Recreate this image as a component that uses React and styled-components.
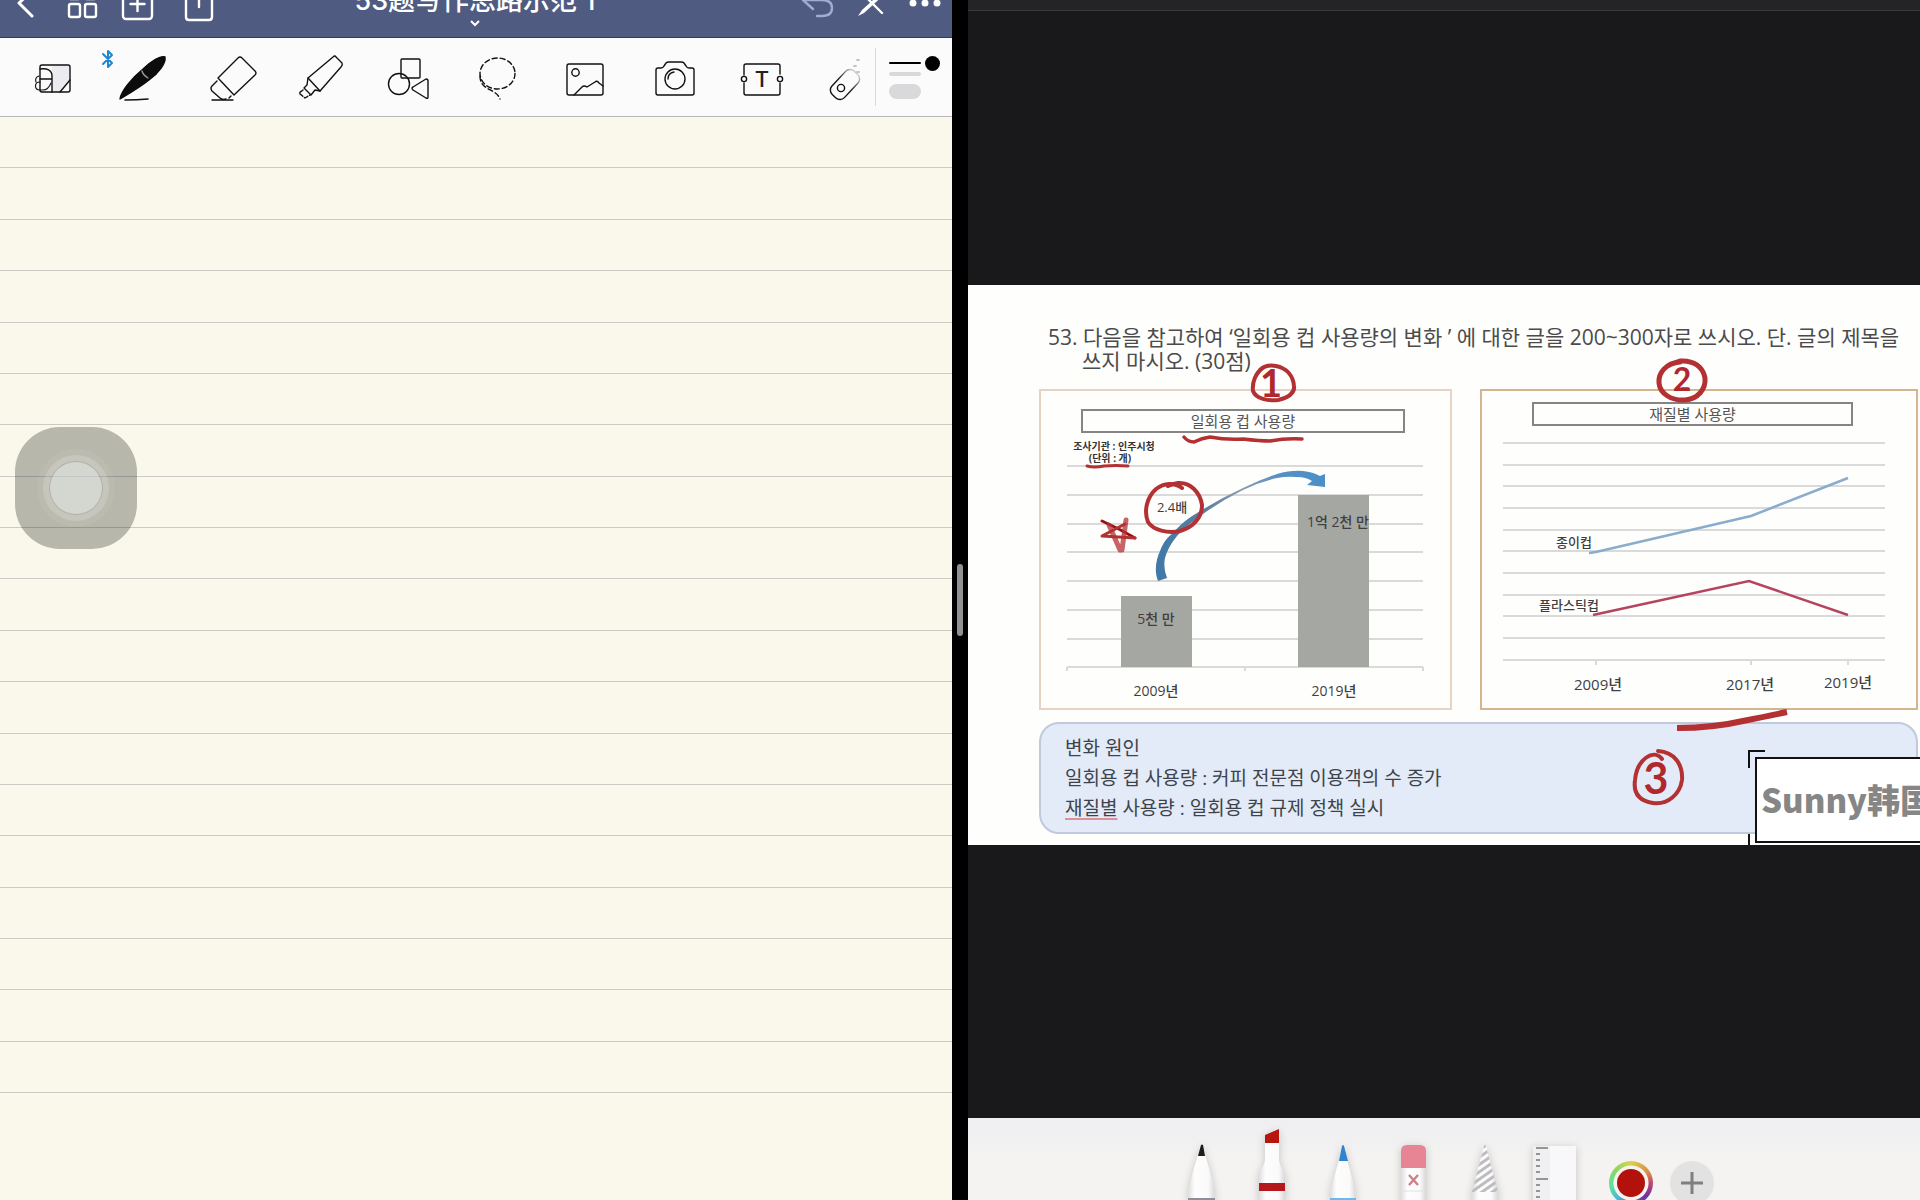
import { useState } from 'react'
import styled, { createGlobalStyle, css } from 'styled-components'

const GlobalStyle = createGlobalStyle`
*{
    box-sizing: border-box;
}
body{
    margin: 0;
    background: #000;
    font-family: "Open Sans", "Noto Sans CJK KR", sans-serif;
}
h1, h2, p, ul{
    margin: 0;
    padding: 0;
}
button{
    padding: 0;
    border: none;
    background: none;
    cursor: pointer;
}
svg{
    display: block;
    overflow: visible;
}
`

/* ---------- notebook (left side) ---------- */

const tools = [
    {
        name: 'Read only',
        icon: <>
            <path d="M23 17H40V31L31 42H23Z" fill="#ececf0" stroke="none"/>
            <rect x="11" y="16" width="30" height="27" rx="2"/>
            <path d="M11 20C18 19 23 21 23 27V43M11 30H23M31 43L41 31"/>
            <path d="M10 27C7 28 6 30 7 33M11 33C5 33 5 41 11 41H14C17 41 20 39 22 34" strokeWidth="1.1"/>
        </>
    },
    {
        name: 'Pen',
        bluetooth: true,
        icon: <>
            <path d="M3 50C4 42 15 29 26 20C34 12 44 6 48 8C49 14 42 24 32 31C22 39 8 47 3 50Z" fill="#0c0c0c" stroke="#0c0c0c"/>
            <path d="M25 22Q26 26 31 29" stroke="#9a9a9a"/>
            <path d="M8 51Q20 51 31 50" strokeWidth="1.6"/>
        </>
    },
    {
        name: 'Eraser',
        icon: <>
            <path d="M36 9L49 22Q51 24 49 26L28 46L12 29L32 9Q34 7 36 9Z"/>
            <path d="M11 32L6 37Q4 39 6 42L14 49Q16 51 20 50M23 49L25 47"/>
            <path d="M6 51H27"/>
        </>
    },
    {
        name: 'Highlighter',
        icon: <>
            <path d="M42 8L48 14Q49 16 47 18L26 42L14 29L39 8Q41 6 42 8Z"/>
            <path d="M14 29L13 36L10 39L17 46L21 41L26 42"/>
            <path d="M9 41L5 44L11 49L16 46" strokeDasharray="4 2"/>
        </>
    },
    {
        name: 'Shapes',
        icon: <>
            <rect x="18" y="10" width="19" height="19" rx="1"/>
            <circle cx="16" cy="35" r="10.5"/>
            <path d="M30 38L43 30Q45 30 45 32V48Q45 50 43 49L30 41Q28 39 30 38Z"/>
        </>
    },
    {
        name: 'Lasso',
        icon: <>
            <ellipse cx="26.5" cy="24.5" rx="17.5" ry="15.5" strokeDasharray="5 3"/>
            <path d="M9 27C9 42 25 39 29 50" strokeDasharray="5 3"/>
        </>
    },
    {
        name: 'Image',
        icon: <>
            <rect x="7" y="15" width="36" height="31" rx="2"/>
            <circle cx="15.5" cy="23.5" r="3.7"/>
            <path d="M14 46L22 38Q24 36 27 38L35 33Q37 31 39 34L43 37"/>
        </>
    },
    {
        name: 'Camera',
        icon: <>
            <path d="M10 19H13Q15 19 16 17L18 14Q19 13 21 13H33Q35 13 36 14L38 17Q39 19 41 19H44Q46 19 46 21V44Q46 46 44 46H10Q8 46 8 44V21Q8 19 10 19Z"/>
            <circle cx="27" cy="30" r="10"/>
            <path d="M20 30Q20 24 26 23"/>
        </>
    },
    {
        name: 'Text',
        icon: <>
            <path d="M7 26V17Q7 15 9 15H41Q43 15 43 17V25M43 34V44Q43 46 41 46H9Q7 46 7 44V34"/>
            <circle cx="7" cy="30" r="2.6"/>
            <circle cx="43" cy="30" r="2.6"/>
            <text x="25" y="38" textAnchor="middle" fontSize="22" fontWeight="500" fontFamily="Inter, sans-serif" fill="#222" stroke="none">T</text>
        </>
    },
    {
        name: 'Laser pointer',
        icon: <>
            <defs>
                <linearGradient id="laser" x1="0" x2="1">
                    <stop offset="0.5" stopColor="#111"/>
                    <stop offset="1" stopColor="#ccc"/>
                </linearGradient>
            </defs>
            <rect x="4" y="27" width="32" height="17" rx="6" transform="rotate(-47 20 35.5)" stroke="url(#laser)"/>
            <circle cx="16" cy="39" r="3.6"/>
            <path d="M32 11h2M29 17h2M32 23h2" stroke="#c4c4c4" strokeWidth="2"/>
        </>
    }
]

const Notebook = () => {
    const [tool, setTool] = useState('Pen')

    return(
        <NotePane>
            <NavBar>
                <NavGroup>
                    <NavButton aria-label="Back">
                        <svg width="40" height="44" viewBox="0 0 40 44"><path d="M28 -2L14 11L27 24" strokeWidth="3"/></svg>
                    </NavButton>
                    <NavButton aria-label="All pages">
                        <svg width="40" height="44" viewBox="0 0 40 44">
                            <rect x="6" y="-6" width="11" height="13" rx="2"/>
                            <rect x="22" y="-6" width="11" height="13" rx="2"/>
                            <rect x="6" y="12" width="11" height="13" rx="2"/>
                            <rect x="22" y="12" width="11" height="13" rx="2"/>
                        </svg>
                    </NavButton>
                    <NavButton aria-label="Add page">
                        <svg width="40" height="44" viewBox="0 0 40 44">
                            <rect x="2" y="-1" width="29" height="28" rx="3"/>
                            <path d="M16.500 5V19M9.500 12H23.500"/>
                        </svg>
                    </NavButton>
                    <NavButton aria-label="Share">
                        <svg width="40" height="44" viewBox="0 0 40 44">
                            <path d="M12 1H9Q7 1 7 3V25Q7 28 10 28H30Q33 28 33 25V3Q33 1 31 1H28M20 -6V15"/>
                        </svg>
                    </NavButton>
                </NavGroup>
                <TitleButton aria-label="Document menu">
                    <NoteTitle>53题写作思路示范 1</NoteTitle>
                    <svg width="12" height="8" viewBox="0 0 12 8"><path d="M2 2L6 6L10 2"/></svg>
                </TitleButton>
                <NavGroup $right>
                    <NavButton aria-label="Undo" $dim>
                        <svg width="40" height="44" viewBox="0 0 40 44"><path d="M16 17L6 8L16 -1M7 8H25Q35 8 35 16Q35 24 25 24H20"/></svg>
                    </NavButton>
                    <NavButton aria-label="Edit mode">
                        <svg width="40" height="44" viewBox="0 0 40 44">
                            <path d="M11 1L31 21"/>
                            <path d="M33 -2L11 18L7 24L13 21L35 1Z" fill="#fff" stroke="none"/>
                        </svg>
                    </NavButton>
                    <NavButton aria-label="More">
                        <svg width="40" height="44" viewBox="0 0 40 44">
                            <g fill="#fff" stroke="none">
                                <circle cx="8" cy="11" r="3.500"/>
                                <circle cx="20" cy="11" r="3.500"/>
                                <circle cx="32" cy="11" r="3.500"/>
                            </g>
                        </svg>
                    </NavButton>
                </NavGroup>
            </NavBar>
            <ToolBar>
                <ToolList>
                    {tools.map((t) => (
                        <ToolButton key={t.name} aria-label={t.name} aria-pressed={tool === t.name} onClick={() => setTool(t.name)}>
                            {t.bluetooth && (
                                <Bluetooth width="12" height="20" viewBox="0 0 12 20">
                                    <path d="M1 5L10 14L6 18V2L10 6L1 15"/>
                                </Bluetooth>
                            )}
                            <svg width="48" height="56" viewBox="0 0 48 56">{t.icon}</svg>
                        </ToolButton>
                    ))}
                </ToolList>
                <StrokePanel>
                    <StrokeList>
                        <StrokeButton aria-label="Thin stroke" $size={2} $active/>
                        <StrokeButton aria-label="Medium stroke" $size={4}/>
                        <StrokeButton aria-label="Thick stroke" $size={15}/>
                    </StrokeList>
                    <InkButton aria-label="Black ink"/>
                </StrokePanel>
            </ToolBar>
            <Paper>
                {Array.from({ length: 19 }, (_, i) => <Rule key={i}/>)}
                <TouchButton aria-label="Assistive touch"/>
            </Paper>
        </NotePane>
    )
}

const NotePane = styled.section`
flex: 1;
min-width: 0;
display: flex;
flex-direction: column;
background: #faf8ea;
`

/* the bar is shorter than its content, the overflow goes off the top */
const NavBar = styled.header`
display: grid;
grid-template-columns: 1fr auto 1fr;
grid-template-rows: 100%;
align-items: end;
height: 38px;
padding: 0 7px 1px 5px;
overflow: hidden;
background: #4f5b80;
border-bottom: 1px solid #2f3a5c;
`

const NavGroup = styled.div`
display: flex;
gap: 18px;
${({ $right }) => $right && css`
    gap: 14px;
    justify-content: flex-end;
`}
`

const NavButton = styled.button`
width: 40px;
height: 44px;
svg{
    fill: none;
    stroke: ${({ $dim }) => ($dim ? '#a3abd0' : '#fff')};
    stroke-width: 2.4;
    stroke-linecap: round;
    stroke-linejoin: round;
}
`

const TitleButton = styled.button`
display: flex;
flex-direction: column;
align-items: center;
padding-bottom: 9px;
color: #fff;
svg{
    fill: none;
    stroke: #fff;
    stroke-width: 2;
}
`

const NoteTitle = styled.h1`
font: 500 27px/36px Inter, "Noto Sans CJK SC", sans-serif;
white-space: nowrap;
`

const ToolBar = styled.div`
display: flex;
align-items: center;
height: 79px;
padding-left: 29px;
background: #fbfbfc;
border-bottom: 1px solid #b6b8ba;
`

const ToolList = styled.div`
flex: 1;
display: flex;
justify-content: space-between;
`

const ToolButton = styled.button`
position: relative;
width: 48px;
height: 56px;
svg{
    fill: none;
    stroke: #111;
    stroke-width: 1.4;
    stroke-linecap: round;
    stroke-linejoin: round;
}
`

const Bluetooth = styled.svg`
position: absolute;
left: -15px;
top: 0;
&&{
    stroke: #1f86cf;
    stroke-width: 2;
}
`

const StrokePanel = styled.div`
display: flex;
gap: 4px;
width: 77px;
height: 58px;
margin-left: 2px;
padding: 7px 0 0 13px;
border-left: 1px solid #d9d9dc;
`

const StrokeList = styled.div`
display: flex;
flex-direction: column;
gap: 8px;
padding-top: 7px;
`

const StrokeButton = styled.button`
width: 32px;
height: ${({ $size }) => $size}px;
border-radius: 8px;
background: ${({ $active }) => ($active ? '#000' : '#d9d9db')};
`

const InkButton = styled.button`
width: 15px;
height: 15px;
margin-top: 1px;
border-radius: 50%;
background: #000;
`

const Paper = styled.div`
position: relative;
flex: 1;
display: flex;
flex-direction: column;
padding-bottom: 107px;
`

const Rule = styled.div`
flex: 1;
border-bottom: 1px solid #cbcbc5;
`

const TouchButton = styled.button`
position: absolute;
left: 15px;
top: 310px;
width: 122px;
height: 122px;
border-radius: 45px;
background: rgba(37, 38, 36, 0.31);
&::after{
    content: '';
    display: block;
    width: 52px;
    height: 52px;
    margin: auto;
    border-radius: 50%;
    background: rgba(236, 240, 238, 0.55);
    box-shadow: 0 0 0 1px rgba(120, 120, 115, 0.25), 0 0 0 7px rgba(255, 255, 255, 0.16), 0 0 0 13px rgba(255, 255, 255, 0.06);
}
`

/* ---------- slide (right side) ---------- */

const usage = [
    { year: '2009년', x: 80, mid: 115, top: 163, label: '5천 만', labelX: 115, labelY: 191 },
    { year: '2019년', x: 257, mid: 293, top: 62, label: '1억 2천 만', labelX: 297, labelY: 94 }
]

const UsageChart = () => (
    <Chart viewBox="0 0 409 275" role="img" aria-label="일회용 컵 사용량">
        <defs>
            <linearGradient id="arrow" x1="0" x2="1">
                <stop offset="0" stopColor="#3f78a8"/>
                <stop offset="0.3" stopColor="#5f7f9c"/>
                <stop offset="0.5" stopColor="#8a9cb0"/>
                <stop offset="0.75" stopColor="#5490c2"/>
                <stop offset="1" stopColor="#4b8fc9"/>
            </linearGradient>
        </defs>
        <ChartNote x="73" y="17">조사기관 : 인주시청</ChartNote>
        <ChartNote x="69" y="29">(단위 : 개)</ChartNote>
        {[33, 62, 91, 119, 148, 177, 206, 234].map((y) => <GridLine key={y} x1="26" x2="382" y1={y} y2={y}/>)}
        {[26, 204, 382].map((x) => <GridLine key={x} x1={x} x2={x} y1="234" y2="238"/>)}
        {usage.map((u) => (
            <g key={u.year}>
                <rect x={u.x} y={u.top} width="71" height={234 - u.top} fill="#a5a7a3"/>
                <ChartText x={u.labelX} y={u.labelY} $size={14}>{u.label}</ChartText>
                <ChartText x={u.mid} y="263" $size={14}>{u.year}</ChartText>
            </g>
        ))}
        <ChartText x="131" y="79">2.4배</ChartText>
        <path
            fill="url(#arrow)"
            d="M117 148C113 138 115 127 119 118C123 108 126 105 132 100C140 91 147 85 156 80Q178 66 202 55Q220 46 236 41Q250 37 262 38Q272 39 279 43L284 41V54L266 52L271 48Q265 44 256 44Q246 43 236 45Q218 49 202 57Q180 68 162 81C150 90 142 96 136 103Q127 114 124 125Q122 135 126 145Z"
        />
    </Chart>
)

const MaterialChart = () => (
    <Chart viewBox="0 0 434 282" role="img" aria-label="재질별 사용량">
        {[17, 39, 60, 82, 104, 125, 147, 169, 190, 212, 234].map((y) => <GridLine key={y} x1="21" x2="403" y1={y} y2={y}/>)}
        {[114, 269, 366].map((x) => <GridLine key={x} x1={x} x2={x} y1="234" y2="239"/>)}
        <polyline points="107,127 114,126 269,90 366,52" fill="none" stroke="#8aaccd" strokeWidth="2.500"/>
        <polyline points="111,189 267,155 366,189" fill="none" stroke="#b5455e" strokeWidth="2.500"/>
        <ChartText x="92" y="121">종이컵</ChartText>
        <ChartText x="87" y="184">플라스틱컵</ChartText>
        <ChartText x="116" y="264" $size={15}>2009년</ChartText>
        <ChartText x="268" y="264" $size={15}>2017년</ChartText>
        <ChartText x="366" y="262" $size={15}>2019년</ChartText>
    </Chart>
)

// red pen marks drawn on top of the slide
const Ink = () => (
    <InkLayer viewBox="0 0 952 558">
        <path d="M296 82C287 88 284 98 285 106C288 114 300 116 310 115C320 113 327 108 326 101C325 90 318 83 308 81C302 80 296 81 292 85" strokeWidth="4"/>
        <path d="M216 152Q220 157 226 157Q234 153 242 152Q258 155 275 154Q292 156 302 156Q318 153 334 154" strokeWidth="3.500"/>
        <path d="M119 181Q126 183 136 181Q148 180 160 181" strokeWidth="3"/>
        <path d="M214 203C206 197 196 198 188 204C178 213 176 227 180 237C185 245 200 249 212 246C226 242 234 232 234 220C232 207 222 197 210 198Q204 199 200 201" strokeWidth="4"/>
        <g strokeWidth="3">
            <path d="M134 236Q150 243 167 253" stroke="#9c1014"/>
            <path d="M167 253L134 251L157 239"/>
            <path d="M141 240L152 265M158 235L154 265" strokeWidth="5" opacity="0.75"/>
        </g>
        <path d="M712 77C698 78 690 88 691 98C692 109 704 116 717 115C730 114 738 104 737 93C735 82 726 75 712 76L706 78" strokeWidth="5"/>
        <path d="M694 474C686 463 669 474 667 495C665 509 672 516 685 518C700 520 712 509 714 495C715 480 707 467 690 466" strokeWidth="4"/>
        <path d="M709 443Q745 443 775 436Q800 431 819 427" strokeWidth="6" strokeLinecap="butt"/>
        <InkDigit x="303" y="112" fontSize="38">1</InkDigit>
        <InkDigit x="714" y="106" fontSize="32">2</InkDigit>
        <InkDigit x="688" y="509" fontSize="43">3</InkDigit>
    </InkLayer>
)

const SlidePane = () => (
    <Viewer>
        <ViewerTop/>
        <Stage>
            <Slide>
                <Question>
                    53. 다음을 참고하여 ‘일회용 컵 사용량의 변화 ’ 에 대한 글을 200~300자로 쓰시오. 단. 글의 제목을<br/>쓰지 마시오. (30점)
                </Question>
                <Cards>
                    <Card>
                        <CardTitle>일회용 컵 사용량</CardTitle>
                        <UsageChart/>
                    </Card>
                    <Card $strong>
                        <CardTitle $strong>재질별 사용량</CardTitle>
                        <MaterialChart/>
                    </Card>
                </Cards>
                <Causes>
                    <p>변화 원인</p>
                    <p>일회용 컵 사용량 : 커피 전문점 이용객의 수 증가</p>
                    <p><Misspelt>재질별</Misspelt> 사용량 : 일회용 컵 규제 정책 실시</p>
                </Causes>
                <Ink/>
                <Watermark>
                    <WatermarkText>Sunny韩国</WatermarkText>
                </Watermark>
            </Slide>
        </Stage>
        <PenTray/>
    </Viewer>
)

const Viewer = styled.section`
flex: 1;
min-width: 0;
display: flex;
flex-direction: column;
background: #19191b;
overflow: hidden;
`

const ViewerTop = styled.div`
height: 11px;
background: #242426;
border-bottom: 1px solid #39393b;
`

const Stage = styled.div`
flex: 1;
display: flex;
flex-direction: column;
justify-content: center;
`

const Slide = styled.article`
position: relative;
padding: 40px 2px 11px 71px;
background: #fefefd;
overflow: hidden;
`

const Question = styled.p`
padding-left: 43px;
text-indent: -34px;
margin-bottom: 16px;
font-size: 21px;
line-height: 24px;
color: #4b4b4b;
white-space: nowrap;
`

const Cards = styled.div`
display: grid;
grid-template-columns: 413fr 438fr;
gap: 28px;
margin-bottom: 12px;
`

const Card = styled.div`
padding-top: ${({ $strong }) => ($strong ? 11 : 18)}px;
border: 2px solid ${({ $strong }) => ($strong ? '#d3b58f' : '#e6d3c4')};
`

const CardTitle = styled.h2`
height: 24px;
margin: ${({ $strong }) => ($strong ? '0 63px 0 50px' : '0 45px 0 40px')};
border: 2px solid #858585;
font-size: 15px;
font-weight: 400;
line-height: 20px;
text-align: center;
color: #555;
`

const Chart = styled.svg`
width: 100%;
height: auto;
`

const GridLine = styled.line`
stroke: #dadada;
stroke-width: 2;
`

const ChartText = styled.text`
text-anchor: middle;
font-size: ${({ $size = 13 }) => $size}px;
font-weight: 500;
fill: #3f3f3f;
`

const ChartNote = styled.text`
text-anchor: middle;
font-size: 10px;
font-weight: 700;
fill: #333;
`

const Causes = styled.div`
padding: 9px 24px;
border: 2px solid #bfcbdb;
border-radius: 20px;
background: #e2ebf7;
font-size: 19px;
line-height: 30px;
color: #3e434b;
`

const Misspelt = styled.span`
text-decoration: underline;
text-decoration-color: #e08f98;
text-decoration-thickness: 2px;
text-underline-offset: 3px;
`

const InkLayer = styled.svg`
position: absolute;
left: 0;
top: 0;
width: 100%;
height: auto;
pointer-events: none;
fill: none;
stroke: #b33033;
stroke-linecap: round;
stroke-linejoin: round;
`

const InkDigit = styled.text`
text-anchor: middle;
font-family: Lato, sans-serif;
font-weight: 700;
fill: #b0282b;
stroke: none;
`

const Watermark = styled.div`
position: absolute;
right: -8px;
bottom: 2px;
width: 173px;
height: 86px;
padding: 16px 0 0 4px;
border: 2px solid #111;
background: #fff;
&::before{
    content: '';
    position: absolute;
    left: -9px;
    top: -9px;
    width: 15px;
    height: 16px;
    border: solid #111;
    border-width: 2px 0 0 2px;
}
&::after{
    content: '';
    position: absolute;
    left: -9px;
    bottom: -6px;
    width: 2px;
    height: 13px;
    background: #111;
}
`

const WatermarkText = styled.p`
font: 900 33px/48px "Noto Sans CJK SC", sans-serif;
color: #868686;
white-space: nowrap;
`

/* ---------- drawing tools under the slide ---------- */

const pens = [
    {
        name: 'Pen',
        icon: <>
            <path d="M33 37C29 50 24 64 23 81H50C49 64 44 50 40 37Z" fill="url(#barrel)"/>
            <path d="M36 27Q37 26 38 27L40 38H33Z" fill="#1c1c1c"/>
            <path d="M23 81H50" stroke="#8b9099" strokeWidth="2"/>
        </>
    },
    {
        name: 'Marker',
        icon: <>
            <path d="M29 25H43V40C43 50 49 50 49 60V84H23V60C23 50 29 50 29 40Z" fill="url(#barrel)"/>
            <path d="M29 17L43 11V25H29Z" fill="#b8150f"/>
            <rect x="23" y="65" width="26" height="8" fill="#b5181a"/>
        </>
    },
    {
        name: 'Pencil',
        icon: <>
            <path d="M32 42C29 54 24 66 23 81H49C48 66 43 54 40 42Z" fill="url(#barrel)"/>
            <path d="M35 28Q36 26 37 28L41 43H32Z" fill="#2f83d0"/>
            <path d="M23 81H49" stroke="#6cb8f0" strokeWidth="2"/>
        </>
    },
    {
        name: 'Eraser',
        icon: <>
            <rect x="23" y="45" width="25" height="40" fill="url(#barrel)"/>
            <path d="M23 50V33Q23 27 29 27H42Q48 27 48 33V50Z" fill="#e78594"/>
            <path d="M31 57L40 67M40 57L31 67" stroke="#cf8089" strokeWidth="2.500"/>
            <path d="M23 73H48" stroke="#e2e2e4"/>
        </>
    },
    {
        name: 'Lasso',
        icon: <>
            <path d="M35 28Q36 26 37 28L49 74V84H23V74Z" fill="url(#barrel)"/>
            <path d="M35 28Q36 26 37 28L49 74H23Z" fill="url(#hatch)"/>
        </>
    },
    {
        name: 'Ruler',
        icon: <>
            <rect x="13" y="28" width="43" height="60" fill="#f8f8fb"/>
            <rect x="13" y="28" width="17" height="60" fill="#f0f0f2"/>
            <path d="M16 30H28M16 61H28" stroke="#777" strokeWidth="1.500"/>
            <path d="M16 36H20M16 42H20M16 48H20M16 54H20M16 67H20M16 73H20M16 79H20" stroke="#777" strokeWidth="1.500"/>
        </>
    }
]

const PenTray = () => (
    <Tray>
        <svg width="0" height="0" aria-hidden="true">
            <defs>
                <linearGradient id="barrel" x1="0" x2="1">
                    <stop offset="0" stopColor="#dedee0"/>
                    <stop offset="0.25" stopColor="#fdfdfe"/>
                    <stop offset="0.75" stopColor="#fafafb"/>
                    <stop offset="1" stopColor="#d8d8da"/>
                </linearGradient>
                <pattern id="hatch" width="6" height="6" patternUnits="userSpaceOnUse" patternTransform="rotate(55)">
                    <rect width="3" height="6" fill="#bdbdbf"/>
                </pattern>
            </defs>
        </svg>
        {pens.map((p) => (
            <PenButton key={p.name} aria-label={p.name}>
                <svg width="71" height="82" viewBox="0 0 71 82" fill="none">{p.icon}</svg>
            </PenButton>
        ))}
        <TrayActions>
            <ColorButton aria-label="Colour"/>
            <AddButton aria-label="Add">
                <svg width="22" height="22" viewBox="0 0 22 22"><path d="M11 0V22M0 11H22" stroke="#7f7f81" strokeWidth="3"/></svg>
            </AddButton>
        </TrayActions>
    </Tray>
)

const Tray = styled.footer`
display: flex;
justify-content: center;
height: 82px;
overflow: hidden;
background: linear-gradient(#efeef1, #f4f3f1 50%);
`

const PenButton = styled.button`
width: 71px;
height: 82px;
svg{
    filter: drop-shadow(0 2px 4px rgba(0, 0, 0, 0.2));
}
`

const TrayActions = styled.div`
display: flex;
gap: 17px;
padding: 43px 9px 0 18px;
`

const ColorButton = styled.button`
width: 44px;
height: 44px;
border-radius: 50%;
border: 8px solid transparent;
background:
    radial-gradient(#b3120c, #b3120c) padding-box,
    radial-gradient(circle, #f6f3f1 0 17px, transparent 18px) border-box,
    conic-gradient(#d8d24c, #d88a48 60deg, #c0486e 90deg, #6f2f9c 130deg, #4866d0 180deg, #48b8d8 220deg, #5fe0a0 260deg, #8ad860 310deg, #d8d24c) border-box;
`

const AddButton = styled.button`
display: flex;
align-items: center;
justify-content: center;
width: 44px;
height: 44px;
border-radius: 50%;
background: #e2e2e2;
`

/* ---------- page ---------- */

const App = () => (
    <Screen>
        <GlobalStyle/>
        <Notebook/>
        <Divider>
            <Handle/>
        </Divider>
        <SlidePane/>
    </Screen>
)

const Screen = styled.main`
display: flex;
min-height: 100vh;
`

const Divider = styled.div`
display: flex;
align-items: center;
justify-content: center;
width: 16px;
background: #000;
`

const Handle = styled.div`
width: 6px;
height: 72px;
border-radius: 3px;
background: #929292;
`

export default App
